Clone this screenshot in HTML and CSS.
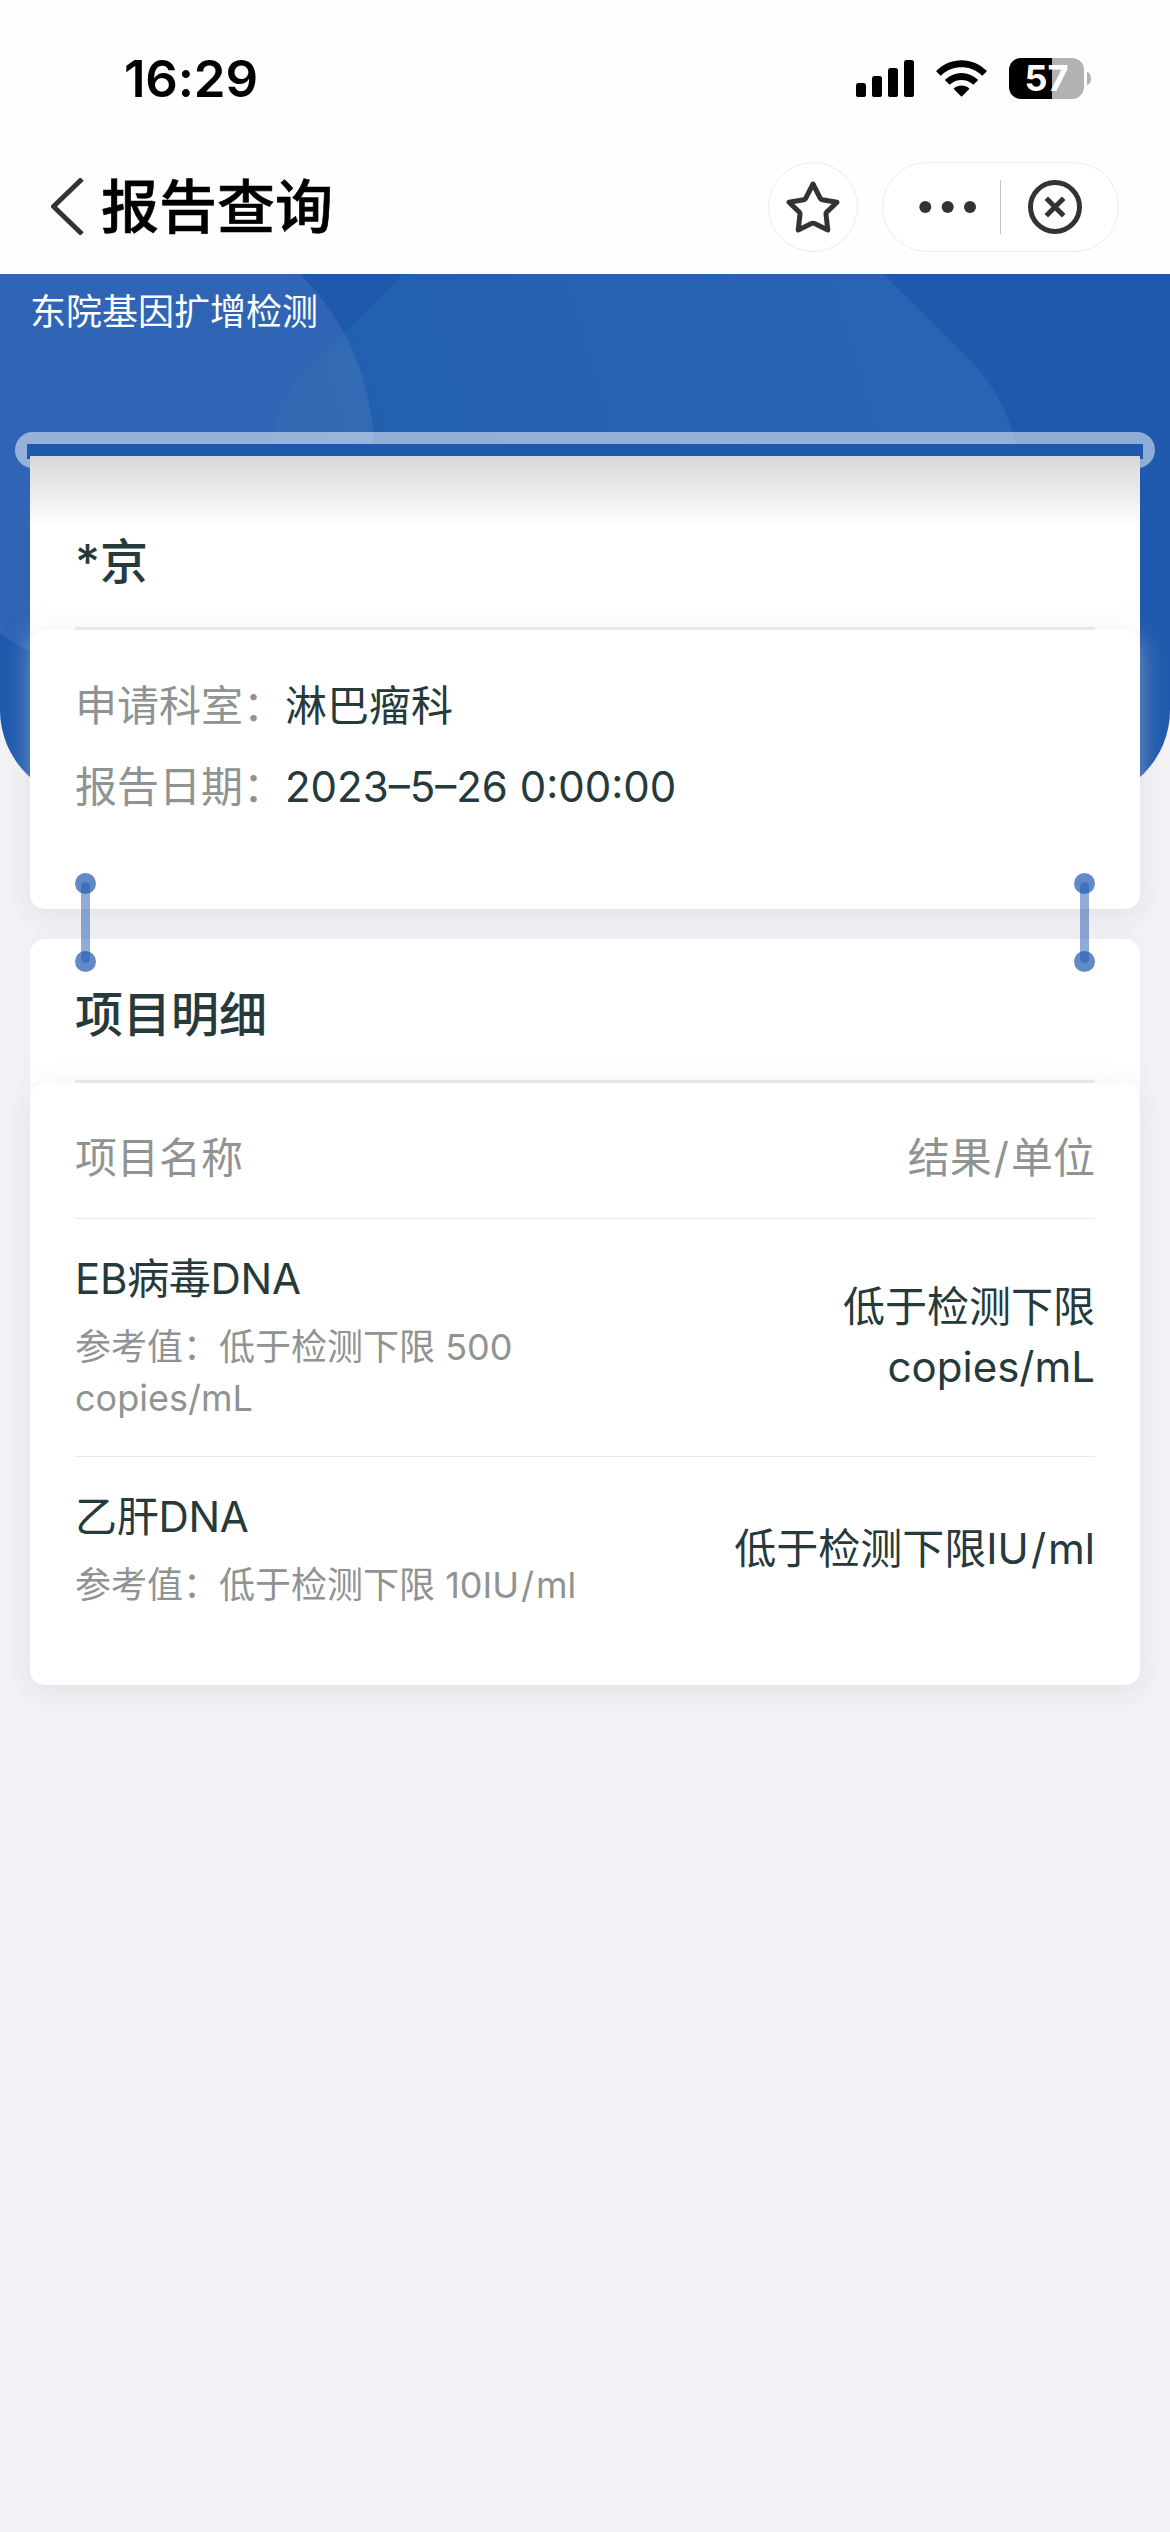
FILE: index.html
```html
<!DOCTYPE html>
<html lang="zh-CN">
<head>
<meta charset="utf-8">
<title>报告查询</title>
<link rel="stylesheet" href="styles.css">
</head>
<body>
<header class="top">
  <div class="status">
    <span class="time">16:29</span>
    <div class="status-icons">
      <svg class="signal" width="58" height="37" viewBox="0 0 58 37"><rect x="0" y="23" width="10" height="14" rx="2.6"/><rect x="16" y="16" width="10" height="21" rx="2.6"/><rect x="32" y="8" width="10" height="29" rx="2.6"/><rect x="48" y="0" width="10" height="37" rx="2.6"/></svg>
      <svg class="wifi" width="51" height="37" viewBox="0 0 51 37"><path d="M0.6 10.6C14.6-3.3 36.4-3.3 50.4 10.6Q50.9 11.2 50.4 11.7L46.8 15.2Q46.2 15.7 45.6 15.2C34.3 4.6 16.700 4.6 5.400 15.2Q4.800 15.700 4.200 15.200L.6 11.700Q.1 11.200 .6 10.600Z"/><path d="M9.300 19.400C18.500 10.700 32.500 10.700 41.700 19.400Q42.200 20 41.700 20.500L37.900 24.200Q37.400 24.700 36.800 24.200C30.400 18.500 20.600 18.500 14.200 24.200Q13.600 24.700 13.100 24.200L9.300 20.500Q8.800 20 9.300 19.400Z"/><path d="M18 28.200C22.300 24.500 28.700 24.500 33 28.200Q33.500 28.800 33 29.300L26.100 36.200Q25.500 36.800 24.900 36.200L18 29.300Q17.500 28.800 18 28.200Z"/></svg>
      <div class="battery"><span class="battery-level">57</span><i class="battery-cap"></i></div>
    </div>
  </div>
  <nav class="nav">
    <svg class="back" width="34" height="57" viewBox="0 0 34 57"><path d="M31 1L2.500 28.500L31 56"/></svg>
    <h1 class="title">报告查询</h1>
    <button class="star" aria-label="收藏"><svg width="54" height="52" viewBox="0 0 54 52"><path d="M27 3L34.300 17.300Q34.900 18.500 36.200 18.700L51 21.200L40.700 31.100Q39.800 32.100 40 33.400L41.800 49L28.500 42.600Q27 41.900 25.500 42.600L12.200 49L14 33.400Q14.200 32.100 13.300 31.100L3 21.200L17.800 18.700Q19.100 18.500 19.700 17.300Z"/></svg></button>
    <div class="capsule">
      <svg class="dots" width="58" height="12" viewBox="0 0 58 12"><circle cx="6.300" cy="6" r="6"/><circle cx="28.700" cy="6" r="6"/><circle cx="51" cy="6" r="6"/></svg>
      <span class="rule"></span>
      <svg class="close" width="54" height="54" viewBox="0 0 54 54"><circle cx="27" cy="27" r="24.500"/><path d="M18.300 18.300L35.700 35.700M35.700 18.300L18.300 35.700"/></svg>
    </div>
  </nav>
</header>
<main class="page">
  <svg class="backdrop" width="1170" height="526" viewBox="0 0 1170 526" aria-hidden="true">
    <defs><linearGradient id="sheen" x1="300" y1="170" x2="860" y2="0" gradientUnits="userSpaceOnUse"><stop offset="0" stop-color="#215fad"/><stop offset="1" stop-color="#2b63b4"/></linearGradient></defs>
    <path fill="url(#sheen)" d="M404 0L310 93Q270 130 270 182L1018 182Q1010 130 973 89L883 0Z"/>
    <path fill="#fff" fill-opacity=".075" d="M0 0H300C348 48 374 110 374 182V378H30L0 360Z"/>
  </svg>
  <p class="lab">东院基因扩增检测</p>
  <div class="slot"><div class="slot-gap"></div></div>
  <section class="card patient">
    <div class="card-head"><h2>*京</h2></div>
    <div class="card-body">
      <p class="field"><span>申请科室：</span>淋巴瘤科</p>
      <p class="field"><span>报告日期：</span><b class="date">2023–5–26 0:00:00</b></p>
    </div>
  </section>
  <section class="card detail">
    <i class="link left"></i><i class="link right"></i>
    <div class="card-head"><h2>项目明细</h2></div>
    <div class="card-body">
      <div class="row columns"><span>项目名称</span><span>结果<span class="slash">/</span>单位</span></div>
      <div class="row">
        <div class="item"><h3>EB病毒DNA</h3><p>参考值：低于检测下限 500 copies/mL</p></div>
        <div class="value">低于检测下限 copies/mL</div>
      </div>
      <div class="row">
        <div class="item"><h3>乙肝DNA</h3><p>参考值：低于检测下限 10IU<span class="slash">/</span>ml</p></div>
        <div class="value">低于检测下限IU<span class="slash">/</span>ml</div>
      </div>
    </div>
  </section>
</main>
</body>
</html>
```
FILE: styles.css
```css
* { box-sizing: border-box; margin: 0; padding: 0; }
body {
  width: 1170px;
  min-height: 2532px;
  background: #f2f2f7;
  color: #263a3c;
  font-family: Inter, "Noto Sans CJK SC", sans-serif;
  font-size: 42px;
}
svg { display: block; flex: none; }

.top { height: 274px; background: #fefefe; color: #000; }
.status { height: 156px; padding: 0 79px 0 124px; display: flex; align-items: center; justify-content: space-between; }
.time { font-size: 51px; font-weight: 600; letter-spacing: -.2px; }
.status-icons { display: flex; align-items: center; }
.wifi { margin-left: 22px; }
.battery {
  display: flex; align-items: center;
  margin-left: 22px;
}
.battery-level {
  width: 75px; height: 41px; border-radius: 12px;
  background: linear-gradient(90deg, #000 43px, #b2b2b2 43px);
  color: #fff; font-size: 36px; font-weight: 700; line-height: 41px; text-align: center;
}
.battery-cap { width: 4px; height: 13px; margin-left: 3px; border-radius: 0 4px 4px 0 / 0 6.500px 6.500px 0; background: #b2b2b2; }

.nav { height: 118px; padding: 6px 51px 0; display: flex; align-items: flex-start; }
.back { margin-top: 16px; fill: none; stroke: #333; stroke-width: 5; stroke-linejoin: round; }
.title { margin-left: 16px; font-size: 58px; font-weight: 500; line-height: 90px; -webkit-text-stroke: .6px #000; }
.star, .capsule { height: 90px; border: 1px solid #ececec; border-radius: 45px; background: #fff; display: flex; align-items: center; }
.star { width: 90px; margin-left: auto; justify-content: center; }
.star path { fill: none; stroke: #333; stroke-width: 5; stroke-linejoin: round; }
.capsule { width: 237px; margin-left: 24px; padding-left: 36px; }
.dots { fill: #333; }
.rule { width: 1px; height: 54px; margin-left: 23px; background: #c4c4c4; }
.close { margin-left: 27px; fill: none; stroke: #333; stroke-width: 5; }

.page { position: relative; padding-top: 11px; }
.backdrop { position: absolute; top: 0; left: 0; z-index: -1; background: #1f59ae; border-radius: 0 0 90px 90px; }
.lab { padding-left: 30px; color: #fff; font-size: 36px; line-height: 54px; }
.slot { height: 36px; margin: 93px 15px 0; padding: 12px 12px 0; border-radius: 18px; background: rgba(255, 255, 255, .5); }
.slot-gap { height: 15px; background: #1f59ae; }

.card { position: relative; margin: 30px 30px 0; border-radius: 15px; background: #fff; }
.card-head { padding: 46px 45px 0; }
.card-head h2 { padding-bottom: 35px; border-bottom: 3px solid #ebebeb; font-size: 48px; font-weight: 500; line-height: 60px; }
.card-body { padding: 0 45px; background: #fff; border-radius: 15px; box-shadow: 0 6px 27px rgba(212, 212, 212, .5); }
.patient { margin-top: -12px; border-radius: 0 0 15px 15px; }
.patient .card-head { padding-top: 76px; background: linear-gradient(#d8d8d8, #fff 72px); }
.patient .card-body { height: 279px; padding-top: 35px; }
.field { line-height: 81px; display: flex; }
.field span { width: 210px; color: #8f9391; }
.date { font-weight: 400; }

.detail .card-head { border-radius: 15px 15px 0 0; box-shadow: 0 0 24px rgba(0, 0, 0, .03); }
.detail .card-body { height: 602px; padding-top: 15px; }
.row { padding: 30px 0 32px; display: flex; justify-content: space-between; align-items: center; }
.row:not(:last-child) { border-bottom: 1px solid #ebebeb; }
.columns { height: 121px; padding: 0; color: #8f9391; line-height: 60px; }
.item { width: 560px; }
.item h3 { font-size: 42px; font-weight: 400; line-height: 60px; letter-spacing: -.3px; }
.item p { margin-top: 13px; color: #8f9391; font-size: 36px; line-height: 51px; }
.value { max-width: 400px; line-height: 60px; text-align: right; }
.slash { margin: 0 2px; }

/* Pins that join the two cards */
.link { position: absolute; z-index: 1; top: -57px; width: 9px; height: 81px; border-radius: 4.500px; background: rgba(31, 89, 174, .5); }
.link.left { left: 51px; }
.link.right { right: 51px; }
.link::before, .link::after { content: ""; position: absolute; left: -6px; width: 21px; height: 21px; border-radius: 50%; background: rgba(31, 89, 174, .7); }
.link::before { top: -9px; }
.link::after { bottom: -9px; }
```
